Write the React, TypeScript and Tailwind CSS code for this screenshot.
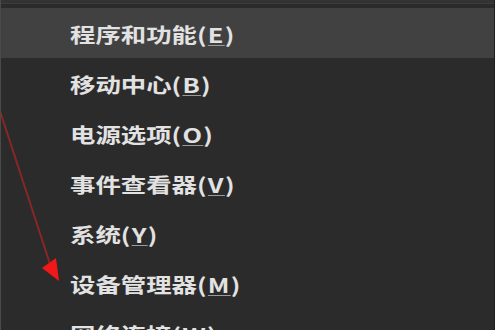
const ITEMS = [
  { label: "程序和功能", key: "E", active: true },
  { label: "移动中心", key: "B" },
  { label: "电源选项", key: "O" },
  { label: "事件查看器", key: "V" },
  { label: "系统", key: "Y" },
  { label: "设备管理器", key: "M" },
  { label: "网络连接", key: "W" },
]

export default function App() {
  return (
    <div className="relative w-[495px] h-[330px] overflow-hidden bg-[#2b2b2b] border-l border-l-[#4a4a4a] border-r border-r-[#1e1e1e]">
      {/* top edge */}
      <div className="h-[8px] border-t-[3px] border-t-[#333333]">
        <div className="h-px bg-[#3c3c3c]" />
      </div>

      <div className="flex flex-col">
        {ITEMS.map(({ label, key, active }) => (
          <div
            key={key}
            className={`h-[50px] shrink-0 flex items-center pl-[69px] pt-[3px] ${active ? "bg-[#414141]" : ""}`}
          >
            <span
              className="inline-block origin-left scale-x-[1.27] text-[20px] leading-none font-semibold text-[#e2e2e2] whitespace-nowrap"
              style={{ fontFamily: '"Noto Sans CJK SC", "Noto Sans", sans-serif' }}
            >
              {label}
              <span className="tracking-[1px]">
                (<span className="underline underline-offset-2 decoration-1 decoration-[#9a9a9a]">{key}</span>)
              </span>
            </span>
          </div>
        ))}
      </div>

      {/* annotation arrow */}
      <svg className="absolute left-0 top-0 pointer-events-none" width="495" height="330" viewBox="0 0 495 330">
        <line x1="-2" y1="108" x2="49" y2="264" stroke="#8a2626" strokeWidth="2" />
        <polygon points="41,268 55,258 58,281" fill="#f01818" />
      </svg>
    </div>
  )
}
